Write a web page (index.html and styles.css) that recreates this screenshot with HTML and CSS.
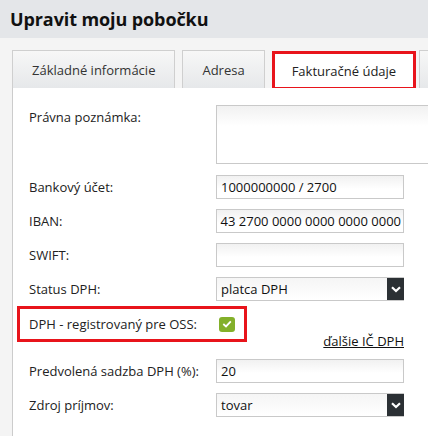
FILE: index.html
```html
<!DOCTYPE html>
<html lang="sk">
<head>
<meta charset="utf-8">
<link rel="stylesheet" href="styles.css">
</head>
<body>
<header class="page-head"><h1>Upravit moju pobočku</h1></header>
<main class="wrap">
  <nav class="tabs">
    <div class="tab">Základné informácie</div>
    <div class="tab">Adresa</div>
    <div class="tab active">Fakturačné údaje</div>
    <div class="tab tab-cut"></div>
  </nav>
  <section class="panel">
    <div class="row row-note">
      <label class="lbl">Právna poznámka:</label>
      <div class="field textarea"></div>
    </div>
    <div class="row">
      <label class="lbl">Bankový účet:</label>
      <div class="field input">1000000000 / 2700</div>
    </div>
    <div class="row">
      <label class="lbl">IBAN:</label>
      <div class="field input scrolled"><span>43 2700 0000 0000 0000 0000</span></div>
    </div>
    <div class="row">
      <label class="lbl">SWIFT:</label>
      <div class="field input"></div>
    </div>
    <div class="row">
      <label class="lbl">Status DPH:</label>
      <div class="field select"><span class="sel-text">platca DPH</span><span class="sel-btn"><svg width="10" height="7" viewBox="0 0 10 7"><path d="M1 1.2 L5 5 L9 1.2" fill="none" stroke="#fff" stroke-width="2.2"/></svg></span></div>
    </div>
    <div class="row row-oss">
      <div class="oss-box">
        <label class="lbl">DPH - registrovaný pre OSS:</label>
        <span class="check"><svg width="10" height="8" viewBox="0 0 10 8"><path d="M1.3 4 L4 6.4 L8.8 1.4" fill="none" stroke="#fff" stroke-width="1.8"/></svg></span>
      </div>
    </div>
    <div class="link-row"><a class="more">ďalšie IČ DPH</a></div>
    <div class="row">
      <label class="lbl">Predvolená sadzba DPH (%):</label>
      <div class="field input">20</div>
    </div>
    <div class="row">
      <label class="lbl">Zdroj príjmov:</label>
      <div class="field select"><span class="sel-text">tovar</span><span class="sel-btn"><svg width="10" height="7" viewBox="0 0 10 7"><path d="M1 1.2 L5 5 L9 1.2" fill="none" stroke="#fff" stroke-width="2.2"/></svg></span></div>
    </div>
  </section>
</main>
</body>
</html>
```
FILE: styles.css
```css
* { box-sizing: border-box; }
html, body { margin: 0; padding: 0; }
body {
  width: 428px;
  height: 436px;
  overflow: hidden;
  background: #f4f4f4;
  font-family: "Open Sans", "Noto Sans", sans-serif;
  color: #222;
}
.page-head {
  height: 38px;
  background: #e4e6e9;
  padding: 0 10px;
  display: flex;
  align-items: center;
}
.page-head h1 {
  margin: 0;
  font-size: 18px;
  font-weight: 700;
  color: #111;
  letter-spacing: -0.1px;
}
.wrap {
  height: 398px;
  padding: 12px 0 0 12px;
  overflow: hidden;
}
.tabs {
  display: flex;
  gap: 7px;
  height: 38px;
  white-space: nowrap;
  overflow: hidden;
}
.tab {
  height: 38px;
  padding: 0 19px;
  display: flex;
  align-items: center;
  flex: none;
  font-size: 13px;
  color: #333;
  border: 1px solid #cfcfcf;
  border-bottom: 0;
  background: linear-gradient(#f7f7f7, #e6e8ea);
}
.tab.active {
  background: #fff;
  border: 3px solid #e8141b;
  height: 39px;
  margin-left: 0;
  padding: 0 17px;
  color: #222;
  position: relative;
  top: 1px;
}
.tab-cut {
  width: 20px;
  margin-left: -4px;
}
.panel {
  background: #fff;
  border-left: 1px solid #cccccc;
  height: 348px;
  padding: 17px 0 0 16px;
}
.row {
  display: flex;
  align-items: center;
  height: 24px;
  margin-bottom: 10px;
}
.row-note {
  align-items: flex-start;
  height: 59px;
  margin-bottom: 11px;
}
.row-note .lbl { margin-top: 3px; }
.lbl {
  width: 187px;
  flex: none;
  font-size: 13px;
  color: #222;
}
.field {
  flex: none;
  height: 24px;
  width: 188px;
  border: 1px solid #c9c9c9;
  background: linear-gradient(#f1f1f1, #fff 60%);
  font-size: 13px;
  color: #111;
  display: flex;
  align-items: center;
  padding: 0 4px;
  overflow: hidden;
  white-space: nowrap;
}
.textarea {
  height: 59px;
  width: 212px;
  border-right: 0;
  background: linear-gradient(#f1f1f1, #fff 35%);
}
.scrolled {
  justify-content: flex-end;
  padding: 0 2px 0 1px;
}
.select {
  padding: 0 0 0 4px;
  border-right: 0;
  background: linear-gradient(#f5f5f5, #fff);
}
.sel-text { flex: 1; }
.sel-btn {
  width: 17px;
  height: 24px;
  margin-top: -1px;
  margin-bottom: -1px;
  background: #2b3034;
  display: flex;
  align-items: center;
  justify-content: center;
  flex: none;
}
.row-oss {
  height: 36px;
  margin-left: -12px;
  margin-top: -5px;
  margin-bottom: 0;
}
.oss-box {
  width: 230px;
  height: 36px;
  border: 3px solid #e8141b;
  display: flex;
  align-items: center;
  padding-left: 9px;
}
.oss-box .lbl { width: 190px; }
.check {
  width: 16px;
  height: 15px;
  border-radius: 3px;
  background: #83b02a;
  display: flex;
  align-items: center;
  justify-content: center;
}
.link-row {
  width: 375px;
  display: flex;
  justify-content: flex-end;
  height: 17px;
  margin-top: -10px;
  margin-bottom: 10px;
}
.more {
  font-size: 13px;
  color: #111;
  text-decoration: underline;
}
```
